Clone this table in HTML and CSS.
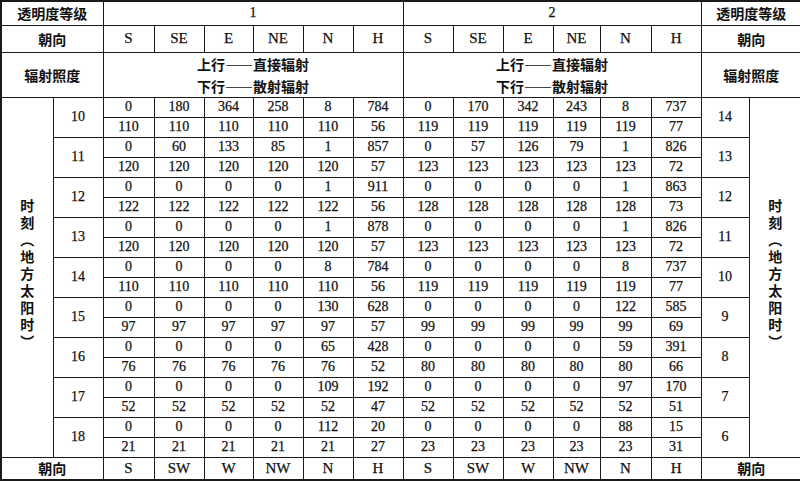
FILE: index.html
```html
<!DOCTYPE html>
<html lang="zh">
<head>
<meta charset="utf-8">
<link rel="stylesheet" href="styles.css">
</head>
<body>
<table class="tbl">
<colgroup>
<col class="c-lab"><col class="c-hr">
<col class="c51"><col class="c50"><col class="c49"><col class="c50"><col class="c50"><col class="c50">
<col class="c50"><col class="c50"><col class="c50"><col class="c47"><col class="c51"><col class="c50">
<col class="c-rhr"><col class="c-rlab">
</colgroup>
<tr class="h1">
<td colspan="2" class="cjk">透明度等级</td>
<td colspan="6">1</td>
<td colspan="6">2</td>
<td colspan="2" class="cjk">透明度等级</td>
</tr>
<tr class="h2">
<td colspan="2" class="cjk">朝向</td>
<td class="dir">S</td><td class="dir">SE</td><td class="dir">E</td><td class="dir">NE</td><td class="dir">N</td><td class="dir">H</td>
<td class="dir">S</td><td class="dir">SE</td><td class="dir">E</td><td class="dir">NE</td><td class="dir">N</td><td class="dir">H</td>
<td colspan="2" class="cjk">朝向</td>
</tr>
<tr class="h3">
<td colspan="2" class="cjk">辐射照度</td>
<td colspan="6" class="cjk note">上行——直接辐射<br>下行——散射辐射</td>
<td colspan="6" class="cjk note">上行——直接辐射<br>下行——散射辐射</td>
<td colspan="2" class="cjk">辐射照度</td>
</tr>

<tr class="d">
<td rowspan="18" class="vcell"><span class="vlabel">时刻（地方太阳时）</span></td>
<td rowspan="2">10</td>
<td>0</td><td>180</td><td>364</td><td>258</td><td>8</td><td>784</td>
<td>0</td><td>170</td><td>342</td><td>243</td><td>8</td><td>737</td>
<td rowspan="2">14</td>
<td rowspan="18" class="vcell"><span class="vlabel">时刻（地方太阳时）</span></td>
</tr>
<tr class="d">
<td>110</td><td>110</td><td>110</td><td>110</td><td>110</td><td>56</td>
<td>119</td><td>119</td><td>119</td><td>119</td><td>119</td><td>77</td>
</tr>

<tr class="d">
<td rowspan="2">11</td>
<td>0</td><td>60</td><td>133</td><td>85</td><td>1</td><td>857</td>
<td>0</td><td>57</td><td>126</td><td>79</td><td>1</td><td>826</td>
<td rowspan="2">13</td>
</tr>
<tr class="d">
<td>120</td><td>120</td><td>120</td><td>120</td><td>120</td><td>57</td>
<td>123</td><td>123</td><td>123</td><td>123</td><td>123</td><td>72</td>
</tr>

<tr class="d">
<td rowspan="2">12</td>
<td>0</td><td>0</td><td>0</td><td>0</td><td>1</td><td>911</td>
<td>0</td><td>0</td><td>0</td><td>0</td><td>1</td><td>863</td>
<td rowspan="2">12</td>
</tr>
<tr class="d">
<td>122</td><td>122</td><td>122</td><td>122</td><td>122</td><td>56</td>
<td>128</td><td>128</td><td>128</td><td>128</td><td>128</td><td>73</td>
</tr>

<tr class="d">
<td rowspan="2">13</td>
<td>0</td><td>0</td><td>0</td><td>0</td><td>1</td><td>878</td>
<td>0</td><td>0</td><td>0</td><td>0</td><td>1</td><td>826</td>
<td rowspan="2">11</td>
</tr>
<tr class="d">
<td>120</td><td>120</td><td>120</td><td>120</td><td>120</td><td>57</td>
<td>123</td><td>123</td><td>123</td><td>123</td><td>123</td><td>72</td>
</tr>

<tr class="d">
<td rowspan="2">14</td>
<td>0</td><td>0</td><td>0</td><td>0</td><td>8</td><td>784</td>
<td>0</td><td>0</td><td>0</td><td>0</td><td>8</td><td>737</td>
<td rowspan="2">10</td>
</tr>
<tr class="d">
<td>110</td><td>110</td><td>110</td><td>110</td><td>110</td><td>56</td>
<td>119</td><td>119</td><td>119</td><td>119</td><td>119</td><td>77</td>
</tr>

<tr class="d">
<td rowspan="2">15</td>
<td>0</td><td>0</td><td>0</td><td>0</td><td>130</td><td>628</td>
<td>0</td><td>0</td><td>0</td><td>0</td><td>122</td><td>585</td>
<td rowspan="2">9</td>
</tr>
<tr class="d">
<td>97</td><td>97</td><td>97</td><td>97</td><td>97</td><td>57</td>
<td>99</td><td>99</td><td>99</td><td>99</td><td>99</td><td>69</td>
</tr>

<tr class="d">
<td rowspan="2">16</td>
<td>0</td><td>0</td><td>0</td><td>0</td><td>65</td><td>428</td>
<td>0</td><td>0</td><td>0</td><td>0</td><td>59</td><td>391</td>
<td rowspan="2">8</td>
</tr>
<tr class="d">
<td>76</td><td>76</td><td>76</td><td>76</td><td>76</td><td>52</td>
<td>80</td><td>80</td><td>80</td><td>80</td><td>80</td><td>66</td>
</tr>

<tr class="d">
<td rowspan="2">17</td>
<td>0</td><td>0</td><td>0</td><td>0</td><td>109</td><td>192</td>
<td>0</td><td>0</td><td>0</td><td>0</td><td>97</td><td>170</td>
<td rowspan="2">7</td>
</tr>
<tr class="d">
<td>52</td><td>52</td><td>52</td><td>52</td><td>52</td><td>47</td>
<td>52</td><td>52</td><td>52</td><td>52</td><td>52</td><td>51</td>
</tr>

<tr class="d">
<td rowspan="2">18</td>
<td>0</td><td>0</td><td>0</td><td>0</td><td>112</td><td>20</td>
<td>0</td><td>0</td><td>0</td><td>0</td><td>88</td><td>15</td>
<td rowspan="2">6</td>
</tr>
<tr class="d">
<td>21</td><td>21</td><td>21</td><td>21</td><td>21</td><td>27</td>
<td>23</td><td>23</td><td>23</td><td>23</td><td>23</td><td>31</td>
</tr>

<tr class="foot">
<td colspan="2" class="cjk">朝向</td>
<td class="dir">S</td><td class="dir">SW</td><td class="dir">W</td><td class="dir">NW</td><td class="dir">N</td><td class="dir">H</td>
<td class="dir">S</td><td class="dir">SW</td><td class="dir">W</td><td class="dir">NW</td><td class="dir">N</td><td class="dir">H</td>
<td colspan="2" class="cjk">朝向</td>
</tr>
</table>
</body>
</html>
```

FILE: styles.css
```css
html, body {
  margin: 0;
  padding: 0;
  background: #ffffff;
}

.tbl {
  width: 800px;
  border-collapse: collapse;
  table-layout: fixed;
  font-family: "Liberation Serif", "Times New Roman", serif;
  color: #111111;
  border-top: 2px solid #1a1a1a;
  border-left: 2px solid #1a1a1a;
  border-bottom: 2px solid #1a1a1a;
}

.c-lab { width: 52px; }
.c-hr { width: 50px; }
.c51 { width: 51px; }
.c50 { width: 50px; }
.c49 { width: 49px; }
.c47 { width: 47px; }
.c-rhr { width: 48px; }
.c-rlab { width: 52px; }

.tbl td {
  border: 1px solid #1a1a1a;
  padding: 0;
  text-align: center;
  vertical-align: middle;
  font-size: 14px;
  line-height: 1;
  overflow: hidden;
  -webkit-text-stroke: 0.25px #111111;
}

.tbl td:last-child {
  border-right: none;
}

.h1 { height: 24px; }
.h2 { height: 27px; }
.h3 { height: 45px; }
.d { height: 20px; }
.foot { height: 23px; }

.cjk {
  font-family: "Noto Sans CJK SC", "Noto Sans CJK JP", sans-serif;
  font-weight: bold;
  font-size: 14px;
}

.tbl td.cjk {
  font-size: 14px;
  -webkit-text-stroke: 0;
}

.tbl td.note {
  line-height: 22px;
}

.tbl td.dir {
  font-size: 15px;
}

.vlabel {
  display: inline-block;
  writing-mode: vertical-rl;
  text-orientation: upright;
  font-family: "Noto Sans CJK SC", "Noto Sans CJK JP", sans-serif;
  font-weight: bold;
  font-size: 14px;
  letter-spacing: 3px;
  line-height: 1;
  -webkit-text-stroke: 0;
}
```
